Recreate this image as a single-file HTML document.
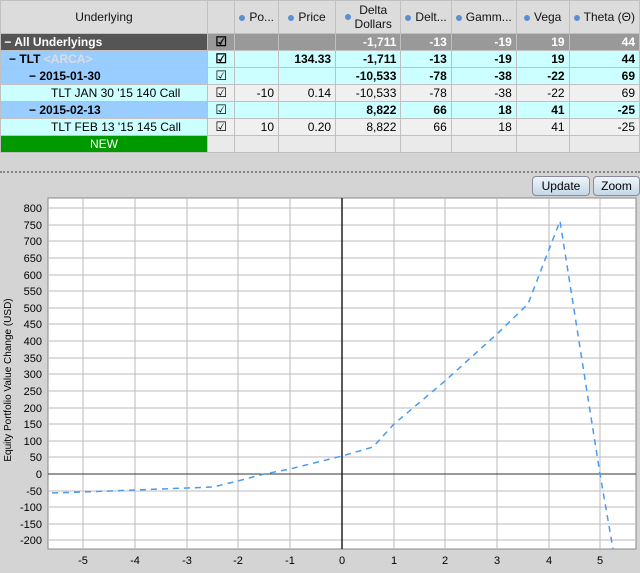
<!DOCTYPE html>
<html><head><style>
body{margin:0;width:640px;height:573px;background:#d4d4d4;font-family:"Liberation Sans",sans-serif;font-size:12px;position:relative;overflow:hidden}
table{border-collapse:collapse;position:absolute;left:0;top:0;table-layout:fixed}
td{border:1px solid #c0c0c0;height:17px;padding:0 4px;text-align:right;white-space:nowrap;overflow:hidden;box-sizing:border-box}
tr.h td{height:33px;background:#dcdcdc;text-align:center;color:#111}
.dot{display:inline-block;width:6px;height:6px;border-radius:50%;background:#5b8fd0;margin-right:4px;vertical-align:middle}
tr.all td{background:#999;color:#fff;font-weight:bold}
tr.all td.n{background:#555;text-align:left;padding-left:0}
tr.tlt td{background:#ccffff;font-weight:bold}
tr.tlt td.n,tr.exp td.n{background:#99ccff;text-align:left}
tr.exp td{background:#ccffff;font-weight:bold}
tr.leg td{background:#f0f0f0}
tr.leg td.n{background:#ccffff;text-align:left;padding-left:50px;font-weight:normal}
tr.new td{background:#eaeaea}
tr.new td.n{background:#009900;color:#fff;text-align:center}
td.c{text-align:center;font-size:13px;padding:0}
.btn{position:absolute;top:176px;height:18px;border:1px solid #889;border-radius:4px;background:linear-gradient(#eef4fa,#c4d8e8);font-size:12px;line-height:18px;text-align:center}
</style></head><body>
<table>
<colgroup><col style="width:211px"><col style="width:30px"><col style="width:39px"><col style="width:59px"><col style="width:67px"><col style="width:47px"><col style="width:62px"><col style="width:54px"><col style="width:67px"></colgroup>
<tr class="h"><td>Underlying</td><td></td><td><span class="dot"></span>Po...</td><td><span class="dot"></span>Price</td><td><span class="dot"></span><span style="display:inline-block;vertical-align:middle;line-height:14px">Delta<br>Dollars</span></td><td><span class="dot"></span>Delt...</td><td><span class="dot"></span>Gamm...</td><td><span class="dot"></span>Vega</td><td><span class="dot"></span>Theta (Θ)</td></tr>
<tr class="all"><td class="n">&nbsp;− All Underlyings</td><td class="c" style="color:#000">☑</td><td></td><td></td><td>-1,711</td><td>-13</td><td>-19</td><td>19</td><td>44</td></tr>
<tr class="tlt"><td class="n" style="padding-left:8px">− TLT <span style="color:#ddd">&lt;ARCA&gt;</span></td><td class="c">☑</td><td></td><td>134.33</td><td>-1,711</td><td>-13</td><td>-19</td><td>19</td><td>44</td></tr>
<tr class="exp"><td class="n" style="padding-left:28px">− 2015-01-30</td><td class="c" style="font-weight:normal">☑</td><td></td><td></td><td>-10,533</td><td>-78</td><td>-38</td><td>-22</td><td>69</td></tr>
<tr class="leg"><td class="n">TLT JAN 30 '15 140 Call</td><td class="c">☑</td><td>-10</td><td>0.14</td><td>-10,533</td><td>-78</td><td>-38</td><td>-22</td><td>69</td></tr>
<tr class="exp"><td class="n" style="padding-left:28px">− 2015-02-13</td><td class="c" style="font-weight:normal">☑</td><td></td><td></td><td>8,822</td><td>66</td><td>18</td><td>41</td><td>-25</td></tr>
<tr class="leg"><td class="n">TLT FEB 13 '15 145 Call</td><td class="c">☑</td><td>10</td><td>0.20</td><td>8,822</td><td>66</td><td>18</td><td>41</td><td>-25</td></tr>
<tr class="new"><td class="n">NEW</td><td></td><td></td><td></td><td></td><td></td><td></td><td></td><td></td></tr>
</table>
<div style="position:absolute;left:0;top:171px;width:640px;border-top:2px dotted #888"></div>
<div class="btn" style="left:532px;width:56px">Update</div>
<div class="btn" style="left:593px;width:45px">Zoom</div>
<svg style="position:absolute;left:0;top:0" width="640" height="573" font-family="Liberation Sans" font-size="11">
<rect x="48" y="198" width="588" height="351" fill="#fff" stroke="#888"/>
<g stroke="#bbb">
<line x1="83" y1="198" x2="83" y2="549"/><line x1="135" y1="198" x2="135" y2="549"/><line x1="187" y1="198" x2="187" y2="549"/><line x1="238" y1="198" x2="238" y2="549"/><line x1="290" y1="198" x2="290" y2="549"/><line x1="394" y1="198" x2="394" y2="549"/><line x1="445" y1="198" x2="445" y2="549"/><line x1="497" y1="198" x2="497" y2="549"/><line x1="549" y1="198" x2="549" y2="549"/><line x1="600" y1="198" x2="600" y2="549"/>
</g>
<g stroke="#bbb" id="hl"></g>
<g stroke="#bbb">
<line x1="48" y1="208" x2="636" y2="208"/><line x1="48" y1="225" x2="636" y2="225"/><line x1="48" y1="241" x2="636" y2="241"/><line x1="48" y1="258" x2="636" y2="258"/><line x1="48" y1="275" x2="636" y2="275"/><line x1="48" y1="291" x2="636" y2="291"/><line x1="48" y1="308" x2="636" y2="308"/><line x1="48" y1="324" x2="636" y2="324"/><line x1="48" y1="341" x2="636" y2="341"/><line x1="48" y1="358" x2="636" y2="358"/><line x1="48" y1="374" x2="636" y2="374"/><line x1="48" y1="391" x2="636" y2="391"/><line x1="48" y1="408" x2="636" y2="408"/><line x1="48" y1="424" x2="636" y2="424"/><line x1="48" y1="441" x2="636" y2="441"/><line x1="48" y1="457" x2="636" y2="457"/><line x1="48" y1="491" x2="636" y2="491"/><line x1="48" y1="507" x2="636" y2="507"/><line x1="48" y1="524" x2="636" y2="524"/><line x1="48" y1="540" x2="636" y2="540"/>
</g>
<line x1="48" y1="474" x2="636" y2="474" stroke="#333"/>
<line x1="342" y1="198" x2="342" y2="549" stroke="#222" stroke-width="1.5"/>
<polyline fill="none" stroke="#4a9af0" stroke-width="1.5" stroke-dasharray="6,5" points="52,493 83,492 135,490 187,488 213,487 238,481 264,474 290,469 342,456 373,447 394,424 445,381 497,334 528,304 560,221 600,474 613,549"/>
<g text-anchor="end" fill="#000">
<text x="42" y="212">800</text><text x="42" y="229">750</text><text x="42" y="245">700</text><text x="42" y="262">650</text><text x="42" y="279">600</text><text x="42" y="295">550</text><text x="42" y="312">500</text><text x="42" y="328">450</text><text x="42" y="345">400</text><text x="42" y="362">350</text><text x="42" y="378">300</text><text x="42" y="395">250</text><text x="42" y="412">200</text><text x="42" y="428">150</text><text x="42" y="445">100</text><text x="42" y="461">50</text><text x="42" y="478">0</text><text x="42" y="495">-50</text><text x="42" y="511">-100</text><text x="42" y="528">-150</text><text x="42" y="544">-200</text>
</g>
<g text-anchor="middle">
<text x="83" y="564">-5</text><text x="135" y="564">-4</text><text x="187" y="564">-3</text><text x="238" y="564">-2</text><text x="290" y="564">-1</text><text x="342" y="564">0</text><text x="394" y="564">1</text><text x="445" y="564">2</text><text x="497" y="564">3</text><text x="549" y="564">4</text><text x="600" y="564">5</text>
</g>
<text transform="translate(11,380) rotate(-90)" text-anchor="middle" font-size="10">Equity Portfolio Value Change (USD)</text>
</svg>
</body></html>
